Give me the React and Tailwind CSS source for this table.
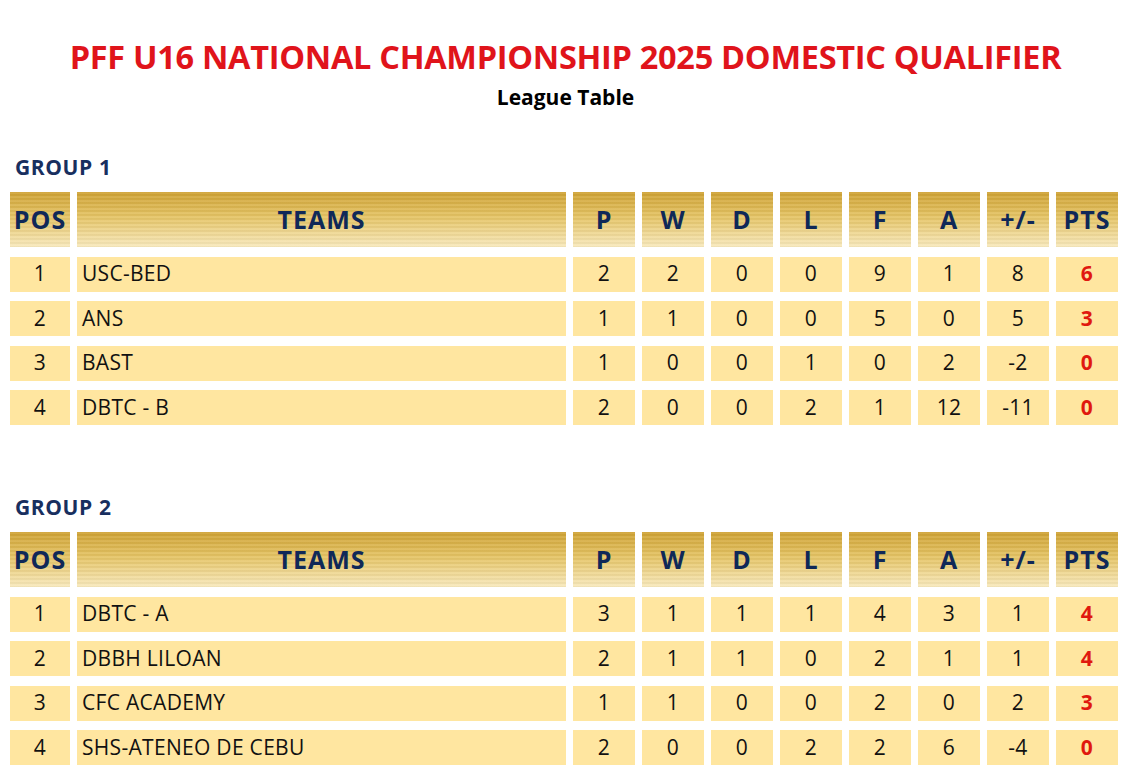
const groups = [
  {
    name: "GROUP 1",
    rows: [
      [1, "USC-BED", 2, 2, 0, 0, 9, 1, 8, 6],
      [2, "ANS", 1, 1, 0, 0, 5, 0, 5, 3],
      [3, "BAST", 1, 0, 0, 1, 0, 2, -2, 0],
      [4, "DBTC - B", 2, 0, 0, 2, 1, 12, -11, 0],
    ],
  },
  {
    name: "GROUP 2",
    rows: [
      [1, "DBTC - A", 3, 1, 1, 1, 4, 3, 1, 4],
      [2, "DBBH LILOAN", 2, 1, 1, 0, 2, 1, 1, 4],
      [3, "CFC ACADEMY", 1, 1, 0, 0, 2, 0, 2, 3],
      [4, "SHS-ATENEO DE CEBU", 2, 0, 0, 2, 2, 6, -4, 0],
    ],
  },
];

const headers = ["P", "W", "D", "L", "F", "A", "+/-", "PTS"];

const headCell =
  "flex h-[55px] items-center justify-center bg-[repeating-linear-gradient(to_bottom,rgba(255,255,255,0.08)_0px,rgba(255,255,255,0.08)_2px,rgba(0,0,0,0.03)_2px,rgba(0,0,0,0.03)_4px),linear-gradient(to_bottom,#cfa233,#e5c465_45%,#f8e9bc)] text-[25px] font-bold tracking-[1px] text-[#0f2858]";

const bodyCell =
  "flex h-[35px] items-center bg-[#ffe6a0] text-[21px] tracking-[0.3px] text-[#111]";

const LeagueGroup = ({ group }) => (
  <div>
    <h2 className="h-[37px] pl-[15px] text-[21px] font-bold leading-[25px] tracking-[0.6px] text-[#182f5f]">
      {group.name}
    </h2>
    <div className="grid grid-cols-[60px_489px_repeat(8,62px)] gap-x-[7px] gap-y-[9.5px] px-[10px]">
      <div className={headCell}>POS</div>
      <div className={headCell}>TEAMS</div>
      {headers.map((h) => (
        <div key={h} className={headCell}>
          {h}
        </div>
      ))}
      {group.rows.map((row) => (
        <div key={row[1]} className="contents">
          <div className={`${bodyCell} justify-center`}>{row[0]}</div>
          <div className={`${bodyCell} pl-[5px]`}>{row[1]}</div>
          {row.slice(2).map((value, i) => (
            <div
              key={i}
              className={`${bodyCell} justify-center ${i === 7 ? "font-bold text-[#e0190f]" : ""}`}
            >
              {value}
            </div>
          ))}
        </div>
      ))}
    </div>
  </div>
);

const App = () => {
  return (
    <div className="h-[770px] w-[1131px] overflow-hidden bg-white font-['Open_Sans',sans-serif]">
      <div className="pt-[36px] text-center">
        <h1 className="h-[42px] text-[32.5px] font-bold leading-[42px] tracking-[-0.3px] text-[#e0141b]">
          PFF U16 NATIONAL CHAMPIONSHIP 2025 DOMESTIC QUALIFIER
        </h1>
        <p className="mt-[6px] h-[26px] text-[21px] font-bold leading-[26px] text-black">
          League Table
        </p>
      </div>
      <div className="mt-[45px]">
        <LeagueGroup group={groups[0]} />
      </div>
      <div className="mt-[70px]">
        <LeagueGroup group={groups[1]} />
      </div>
    </div>
  );
};

export default App;
